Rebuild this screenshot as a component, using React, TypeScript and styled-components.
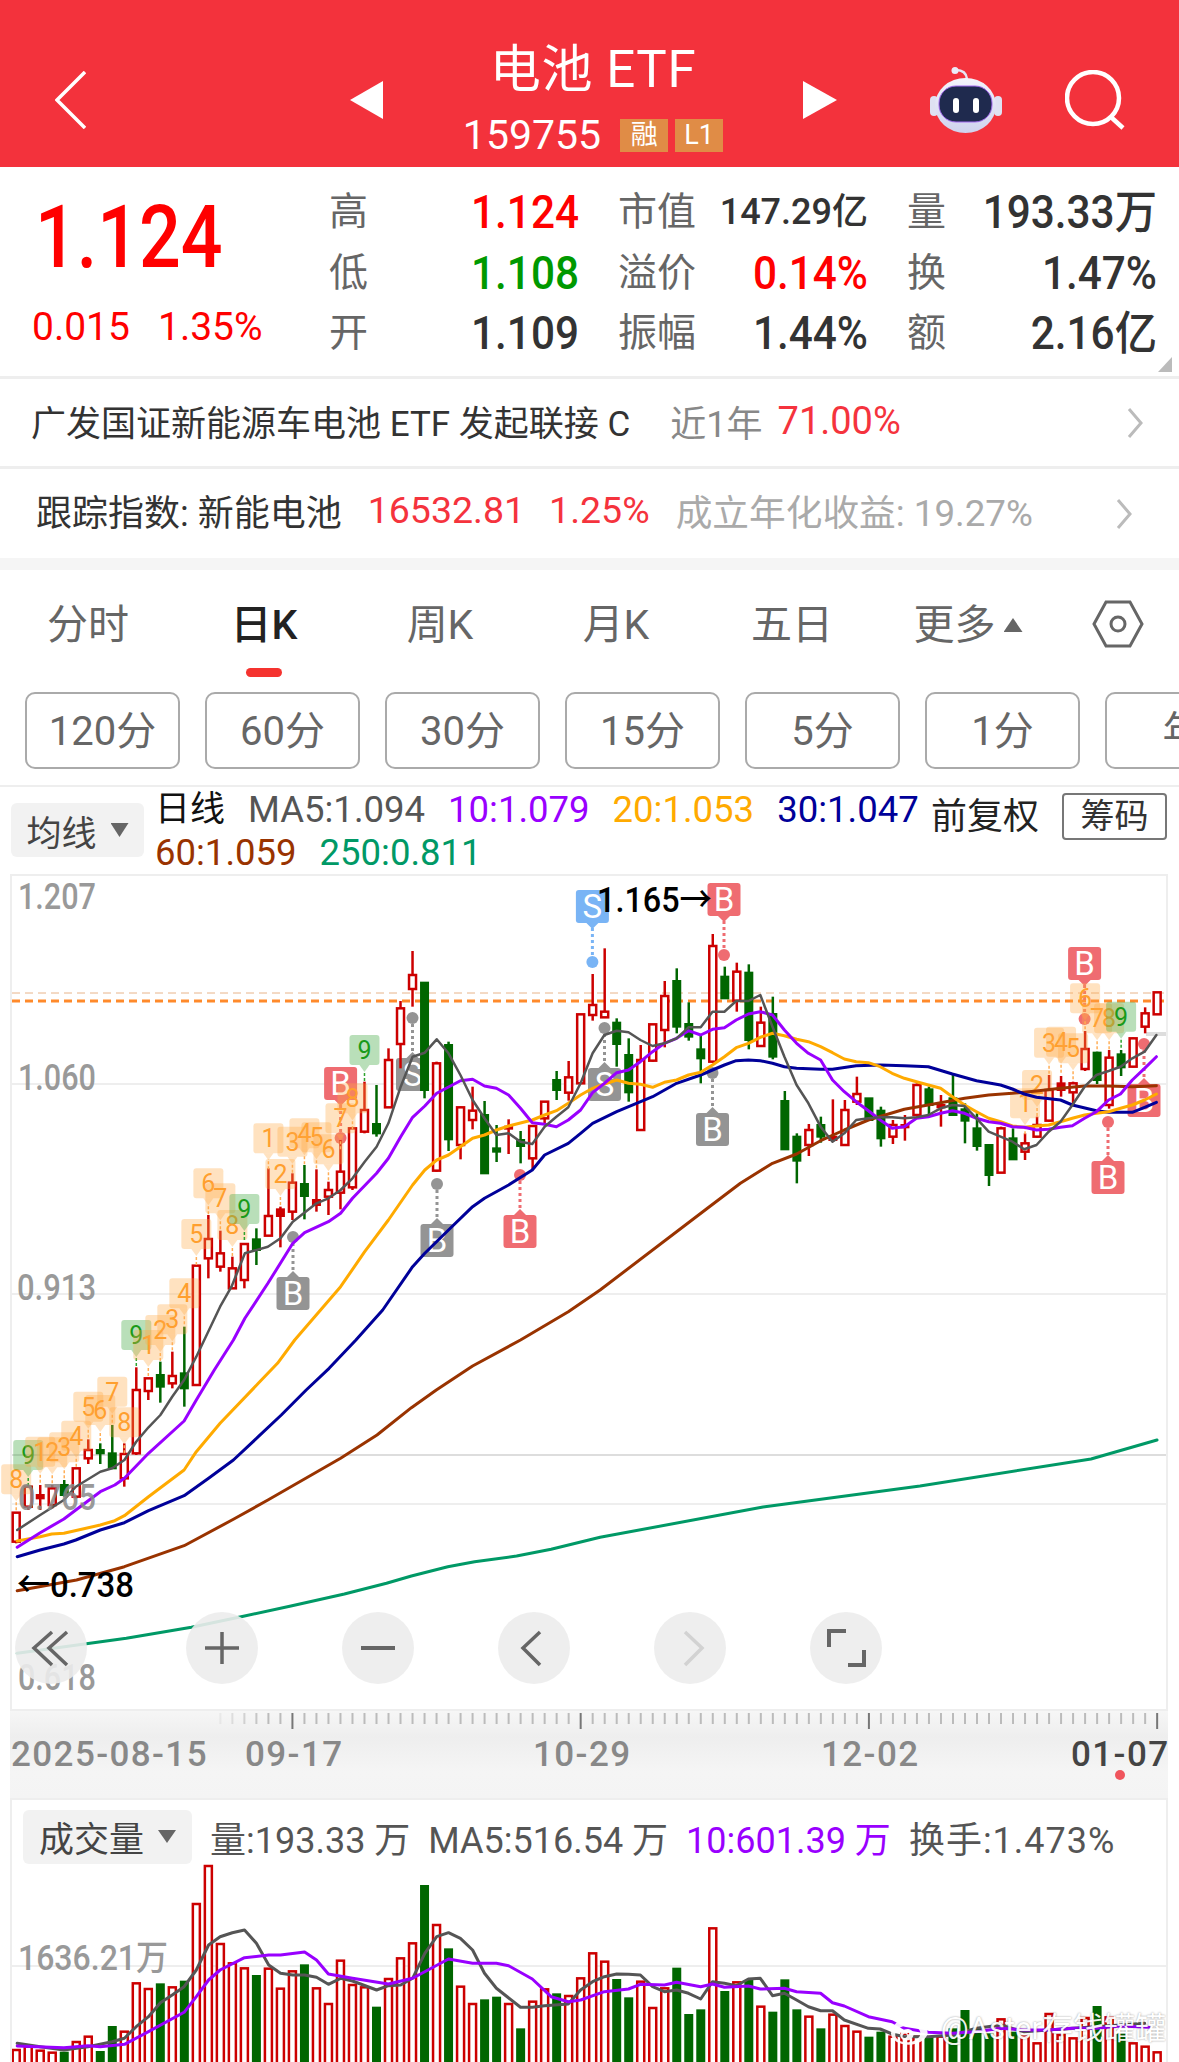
import React from 'react';
import styled, { createGlobalStyle } from 'styled-components';
import { FaWeibo } from 'react-icons/fa';

const GlobalStyle = createGlobalStyle`
    html, body {
        margin: 0;
        padding: 0;
        background: #fff;
    }
    * {
        box-sizing: border-box;
    }
`;

const FONT = 'Roboto, "Noto Sans CJK SC", sans-serif';
const RED = '#cc0000';
const GREEN = '#006600';

type Pt = [number, number];
type Frame = { ox: number; sx: number; oy: number };

// readings off the crops: each zoom has its own origin and x scale
const Z3: Frame = { ox: 0, sx: 2.613, oy: 870 };
const Z4: Frame = { ox: 580, sx: 2.618, oy: 870 };
const Z5: Frame = { ox: 0, sx: 2.613, oy: 1340 };
const Z6: Frame = { ox: 0, sx: 2.613, oy: 1780 };
const Z7: Frame = { ox: 580, sx: 2.618, oy: 1780 };
const PX: Frame = { ox: 0, sx: 1, oy: 0 };

const pts = (s: string, f: Frame): Pt[] =>
    s.split(' ').map((p) => {
        const [x, y] = p.split(',').map(Number);
        return [f.ox + x / f.sx, f.oy + (f === PX ? y : y / 3)] as Pt;
    });

const toPath = (list: Pt[]) => list.map(([x, y]) => `${x.toFixed(1)},${y.toFixed(1)}`).join(' ');

const cx = (i: number) => 16.2 + 12.01 * i;
const cy = (z: number) => 870 + z / 3;

const MA5 = [
    ...pts('45,570 105,525 167,480 198,440 262,395 293,385 325,360 356,305 388,262 419,225 450,170 481,120 513,50', Z5),
    ...pts('575,1310 605,1250 640,1150 700,1130 733,1105 765,1055 827,1000 858,985 890,960 921,925 953,875 984,830 1015,760 1047,650 1078,560 1110,548 1141,508 1172,550 1203,615 1235,690 1266,745 1297,795 1329,790 1360,815 1391,822 1423,770 1454,740 1485,712 1517,640', Z3),
    ...pts('33,550 64,495 96,482 127,487 158,510 190,528 221,520 253,505 284,472 316,472 347,425 378,425 409,393 441,393 472,375 504,470 535,560 567,645 598,700 630,770 661,815 692,790 723,750 755,745 786,742 817,742 849,745 881,742 912,735 944,715 975,705 1007,708 1038,745 1070,785 1101,800 1132,815 1163,838 1195,825 1227,785 1258,755 1289,705 1321,650 1352,615 1384,603 1415,590 1446,565 1478,545 1509,495', Z4),
];
const MA10 = [
    ...pts('45,622 105,578 167,537 198,510 262,455 300,435 325,415 388,340 481,243 513,180 560,90 610,0', Z5),
    ...pts('640,1345 700,1240 765,1120 796,1088 858,1055 890,1030 921,985 984,910 1015,865 1047,800 1078,742 1110,708 1141,670 1203,632 1235,628 1266,648 1297,655 1329,675 1360,715 1391,758 1423,763 1454,770 1485,750 1517,720', Z3),
    ...pts('33,668 64,640 96,608 127,600 158,575 190,545 221,520 253,505 284,482 316,495 347,478 378,473 409,450 441,432 472,425 504,435 535,480 567,520 598,550 630,570 661,630 692,665 723,695 755,722 786,750 817,775 849,770 881,745 912,740 944,730 975,722 1007,730 1038,745 1070,755 1101,760 1132,770 1163,772 1195,780 1227,778 1258,772 1289,767 1321,745 1352,725 1384,690 1415,672 1446,630 1478,595 1509,560', Z4),
];
const MA20 = [
    ...pts('45,603 105,590 135,582 167,580 262,555 300,542 325,527 388,470 481,390 513,335 575,250 675,130 725,70 770,0', Z5),
    ...pts('890,1250 953,1145 1015,1050 1078,945 1110,900 1141,870 1172,855 1203,830 1235,805 1266,795 1297,780 1329,768 1391,750 1423,735 1454,722 1485,700 1517,675', Z3),
    ...pts('33,655 64,642 96,630 127,640 158,643 190,652 221,637 253,630 284,615 316,607 347,585 378,560 409,533 441,520 472,502 504,490 535,497 567,508 598,515 630,530 661,548 692,567 723,575 755,578 786,590 817,610 849,625 881,635 912,645 944,655 975,680 1007,705 1038,725 1070,745 1101,755 1132,768 1163,772 1195,768 1227,765 1258,755 1289,745 1321,735 1352,730 1384,725 1415,715 1446,705 1478,690 1509,672', Z4),
];
const MA30 = [
    ...pts('45,650 105,630 167,612 198,600 262,570 325,548 388,512 481,467 545,415 610,360 675,290 735,225 800,150 860,85 930,0', Z5),
    ...pts('1000,1320 1078,1190 1110,1150 1172,1080 1235,1010 1266,985 1329,945 1391,900 1423,855 1485,820 1517,790', Z3),
    ...pts('33,760 96,725 190,680 253,640 316,615 378,585 409,572 441,570 472,572 504,580 535,590 567,595 630,598 661,598 723,587 786,585 849,587 912,590 975,612 1038,632 1101,645 1132,657 1163,672 1195,682 1258,690 1289,705 1352,722 1384,727 1446,727 1478,712 1509,697', Z4),
];
const MA60 = [
    ...pts('45,752 200,720 325,680 481,617 610,538 700,480 890,355 985,285 1075,203 1140,150 1235,78 1360,0', Z5),
    ...pts('1485,1325 1568,1260', Z3),
    ...pts('330,1018 420,940 504,880 567,852 630,812 692,780 755,750 849,718 944,698 1007,685 1070,675 1132,670 1195,663 1258,655 1321,648 1384,648 1446,650 1509,647', Z4),
];
const MA250 = [
    ...pts('45,940 330,895 500,862 630,830 760,798 900,762 1010,730 1075,708 1170,680 1240,665 1350,648 1440,628 1568,592', Z5),
    ...pts('763,1507 920,1486 1091,1459 1157,1440', PX),
];

const VOL5 = [
    ...pts('45,790 105,800 167,810 230,800 293,785 325,775 356,740 388,710 419,668 450,645 481,620 513,570 545,495 575,470 607,458 639,450 670,490 702,555 733,580 765,585 796,585 827,592 858,613 890,595 921,603 984,630 1015,617 1047,615 1078,595 1110,520 1141,470 1172,458 1203,475 1235,510 1266,580 1297,625 1360,682 1391,682 1423,677 1485,672 1517,630', Z6),
    ...pts('33,605 64,590 96,582 127,583 158,585 190,620 221,635 253,630 284,640 316,657 347,605 378,610 409,617 441,597 472,595 504,647 535,640 567,660 598,680 630,692 661,692 692,720 755,745 786,747 817,762 849,770 912,770 975,765 1038,745 1101,735 1163,755 1227,750 1289,745 1352,740 1415,735 1478,730', Z7),
];
const VOL10 = [
    ...pts('45,798 167,803 230,797 262,800 325,793 388,755 481,697 513,650 545,600 575,570 639,533 702,525 733,525 796,516 827,540 858,582 921,595 1015,612 1078,595 1172,537 1235,550 1297,550 1329,557 1391,597 1440,650 1485,665 1517,660', Z6),
    ...pts('64,635 127,627 158,613 221,615 253,607 316,620 347,612 378,622 441,618 472,627 535,625 567,635 630,640 661,668 692,678 755,710 817,725 849,745 912,757 975,760 1038,755 1101,745 1163,750 1227,750 1289,745 1352,745 1415,738 1490,742', Z7),
];

// kind, body top, body bottom, wick top, wick bottom
type CandleRow = ['h' | 'r' | 'g', number, number, number, number];
const CANDLES: CandleRow[] = [
    ['h', 1928, 2015, 1928, 2020], ['h', 1850, 1910, 1845, 1920], ['r', 1875, 1885, 1845, 1920], ['h', 1855, 1905, 1845, 1915],
    ['g', 1845, 1875, 1830, 1880], ['h', 1795, 1880, 1795, 1885], ['h', 1740, 1765, 1708, 1782], ['g', 1740, 1750, 1720, 1782],
    ['g', 1750, 1795, 1665, 1795], ['h', 1752, 1825, 1720, 1850], ['h', 1560, 1750, 1492, 1755], ['h', 1525, 1563, 1525, 1590],
    ['g', 1515, 1550, 1475, 1598], ['h', 1518, 1540, 1445, 1555], ['g', 1510, 1555, 1370, 1610], ['h', 1187, 1545, 1187, 1545],
    ['h', 1107, 1165, 1035, 1225], ['h', 1150, 1190, 1082, 1205], ['h', 1195, 1255, 1160, 1255], ['h', 1122, 1230, 1122, 1255],
    ['g', 1108, 1140, 1075, 1185], ['h', 1038, 1097, 895, 1097], ['r', 1018, 1038, 1010, 1132], ['h', 938, 1025, 910, 1050],
    ['g', 942, 978, 885, 1048], ['r', 990, 1005, 898, 1025], ['h', 960, 980, 935, 1035], ['h', 905, 968, 810, 1018],
    ['h', 775, 952, 775, 960], ['h', 720, 785, 635, 790], ['g', 762, 790, 645, 800], ['h', 570, 712, 535, 712],
    ['h', 415, 522, 393, 595], ['h', 315, 357, 243, 410], ['g', 338, 660, 338, 685], ['h', 580, 902, 575, 905],
    ['g', 525, 808, 515, 843], ['h', 712, 825, 710, 868], ['h', 722, 750, 650, 778], ['g', 735, 910, 693, 912],
    ['g', 835, 845, 765, 876], ['r', 770, 776, 748, 852], ['g', 810, 828, 783, 880], ['h', 768, 865, 765, 897],
    ['h', 695, 745, 693, 760], ['g', 630, 660, 603, 690], ['h', 622, 668, 573, 692], ['h', 433, 640, 433, 642],
    ['h', 405, 435, 312, 452], ['h', 425, 442, 235, 442], ['g', 458, 522, 445, 590], ['g', 555, 667, 505, 695],
    ['h', 570, 780, 525, 780], ['h', 463, 572, 463, 575], ['h', 378, 480, 333, 532], ['g', 333, 470, 295, 490],
    ['g', 462, 500, 397, 512], ['g', 538, 565, 495, 640], ['h', 228, 575, 192, 578], ['g', 320, 385, 290, 385],
    ['h', 305, 392, 278, 425], ['g', 308, 510, 283, 538], ['h', 458, 528, 410, 530], ['g', 432, 560, 380, 568],
    ['g', 693, 838, 663, 840], ['g', 800, 872, 790, 940], ['h', 780, 825, 762, 858], ['g', 765, 800, 740, 818],
    ['r', 800, 810, 688, 815], ['h', 720, 825, 690, 828], ['h', 672, 695, 620, 705], ['g', 685, 750, 685, 750],
    ['g', 722, 805, 710, 830], ['h', 765, 800, 750, 822], ['r', 765, 772, 735, 812], ['h', 645, 735, 640, 737],
    ['g', 658, 705, 650, 735], ['r', 705, 712, 675, 770], ['g', 685, 735, 613, 735], ['g', 718, 752, 700, 820],
    ['g', 775, 828, 730, 842], ['g', 825, 915, 825, 948], ['h', 775, 908, 770, 908], ['g', 805, 868, 775, 868],
    ['h', 820, 845, 790, 870], ['h', 765, 800, 740, 803], ['h', 660, 752, 615, 755], ['r', 640, 660, 618, 680],
    ['h', 640, 667, 635, 705], ['h', 537, 597, 483, 603], ['g', 548, 630, 545, 642], ['h', 563, 705, 540, 716],
    ['g', 553, 592, 540, 618], ['h', 505, 590, 503, 592], ['h', 430, 470, 412, 490], ['h', 367, 433, 367, 435],
];

// top of each volume bar, in crop units
const VOL_TOPS = [
    810, 800, 812, 818, 815, 786, 770, 813, 738, 755, 610, 627, 610, 622, 602, 372, 258, 492, 550, 565,
    585, 566, 626, 574, 553, 625, 672, 542, 615, 622, 680, 597, 535, 490, 315, 435, 505, 620, 672, 658,
    650, 672, 745, 665, 628, 640, 648, 595, 520, 545, 597, 652, 605, 684, 625, 563, 702, 688, 445, 633,
    607, 600, 680, 695, 598, 688, 710, 745, 704, 738, 755, 770, 755, 770, 762, 770, 770, 770, 745, 690,
    745, 760, 718, 755, 770, 790, 702, 765, 775, 714, 678, 712, 760, 790, 800, 817,
];
const VOL_GREEN = new Set([4, 7, 8, 12, 14, 20, 24, 30, 34, 36, 39, 40, 42, 45, 50, 51, 55, 56, 57, 59, 61, 63, 64, 65, 67, 71, 72, 76, 78, 79, 80, 81, 83, 90, 92]);

// candle index, digit, centre of the flag in crop units
const SEQ: [number, number, number][] = [
    [0, 8, 1828], [1, 9, 1755], [2, 1, 1745], [3, 2, 1747], [4, 3, 1732], [5, 4, 1697], [6, 5, 1610], [7, 6, 1620], [8, 7, 1565], [9, 8, 1657],
    [10, 9, 1395], [11, 1, 1425], [12, 2, 1380], [13, 3, 1348], [14, 4, 1270], [15, 5, 1092], [16, 6, 940], [17, 7, 985], [18, 8, 1065], [19, 9, 1017],
    [21, 1, 805], [22, 2, 912], [23, 3, 815], [24, 4, 790], [25, 5, 802], [26, 6, 838], [27, 7, 745], [28, 8, 685], [29, 9, 540],
    [84, 1, 700], [85, 2, 645], [86, 3, 518], [87, 4, 515], [88, 5, 535], [89, 6, 385], [90, 7, 445], [91, 8, 445], [92, 9, 440],
];

const FLAG_RED = '#ee6066';
const FLAG_GRAY = '#8c8c8c';
const FLAG_BLUE = '#6eaef5';

// x, top of box, y of dot, letter, colour
const SIGNALS: [number, number, number, string, string][] = [
    [340.6, 1067, 1138, 'B', FLAG_RED],
    [520, 1215, 1175, 'B', FLAG_RED],
    [724, 883, 955, 'B', FLAG_RED],
    [1084.6, 947, 1019, 'B', FLAG_RED],
    [1108, 1161, 1122, 'B', FLAG_RED],
    [1144, 1084, 1044, 'B', FLAG_RED],
    [293, 1277, 1237, 'B', FLAG_GRAY],
    [437, 1224, 1184, 'B', FLAG_GRAY],
    [712.5, 1113, 1073, 'B', FLAG_GRAY],
    [412.5, 1058, 1018, 'S', FLAG_GRAY],
    [604.5, 1068, 1028, 'S', FLAG_GRAY],
    [592.4, 890, 962, 'S', FLAG_BLUE],
];

const Page = styled.div`
    width: 1179px;
    height: 2062px;
    overflow: hidden;
    background: #fff;
    font-family: ${FONT};
    color: #333;
`;

const Header = styled.header`
    height: 167px;
    background: #f3323c;
    display: flex;
    align-items: center;
    padding: 32px 0 0 55px;
    color: #fff;
`;

const IconButton = styled.svg<{ $gap: number }>`
    display: block;
    flex: none;
    margin-left: ${(p) => p.$gap}px;
`;

const TitleBlock = styled.div`
    width: 420px;
    height: 135px;
    margin-top: -32px;
    display: flex;
    flex-direction: column;
    align-items: center;
`;

const Title = styled.div`
    font-size: 51px;
    line-height: 60px;
    margin-top: 24px;
    letter-spacing: 0.6px;
`;

const SubTitle = styled.div`
    display: flex;
    align-items: center;
    gap: 7px;
    margin-top: 19px;
    height: 33px;
`;

const Code = styled.span`
    font-size: 41px;
    line-height: 33px;
    margin-right: 12px;
`;

const Badge = styled.span`
    width: 48px;
    height: 33px;
    background: #e08c46;
    font-size: 27px;
    line-height: 33px;
    text-align: center;
`;

const Quote = styled.section`
    position: relative;
    height: 212px;
    display: flex;
    border-bottom: 3px solid #eee;
`;

const PriceBlock = styled.div`
    width: 329px;
    padding-left: 35px;
    color: #ff0000;
`;

const Price = styled.div`
    font-size: 87px;
    font-weight: 500;
    line-height: 100px;
    margin-top: 20px;
    transform: scaleX(0.845);
    transform-origin: left center;
`;

const Change = styled.div`
    display: flex;
    gap: 28px;
    font-size: 39px;
    line-height: 46px;
    margin: 17px 0 0 -3px;
`;

const QuoteGrid = styled.div`
    display: grid;
    grid-template-columns: 50px 200px 129px 160px 88px 201px;
    grid-template-rows: repeat(3, 60.5px);
    padding-top: 15px;
    align-items: center;
`;

const CellLabel = styled.span<{ $indent?: boolean }>`
    font-size: 39px;
    color: #666;
    line-height: 46px;
    padding-left: ${(p) => (p.$indent ? 39 : 0)}px;
    white-space: nowrap;
`;

const CellValue = styled.span<{ $color?: string; $size?: number }>`
    font-size: ${(p) => p.$size ?? 46}px;
    font-weight: 500;
    line-height: 46px;
    text-align: right;
    white-space: nowrap;
    color: ${(p) => p.$color ?? '#333'};
    transform: scaleX(${(p) => (p.$size ? 1 : 0.92)});
    transform-origin: right center;
`;

const CornerMark = styled.span`
    position: absolute;
    right: 7px;
    bottom: 4px;
    width: 14px;
    height: 15px;
    background: #bbb;
    clip-path: polygon(100% 0, 100% 100%, 0 100%);
`;

const InfoRow = styled.div<{ $last?: boolean; $pad: number }>`
    height: ${(p) => (p.$last ? 101 : 90)}px;
    display: flex;
    align-items: center;
    padding-left: ${(p) => p.$pad}px;
    padding-bottom: ${(p) => (p.$last ? 8 : 4)}px;
    white-space: nowrap;
    border-bottom: ${(p) => (p.$last ? 12 : 3)}px solid ${(p) => (p.$last ? '#f5f5f5' : '#eee')};
    position: relative;
`;

const InfoText = styled.span<{ $color?: string; $gap?: number; $size?: number }>`
    color: ${(p) => p.$color ?? '#333'};
    margin-left: ${(p) => p.$gap ?? 0}px;
    font-size: ${(p) => p.$size ?? 35}px;
`;

const InfoArrow = styled.svg<{ $right: number }>`
    position: absolute;
    right: ${(p) => p.$right}px;
    top: 50%;
    margin-top: -15px;
`;

const Tabs = styled.nav`
    height: 110px;
    display: flex;
`;

const Tab = styled.div<{ $active?: boolean }>`
    width: 176px;
    display: flex;
    flex-direction: column;
    align-items: center;
    padding-top: 31px;
    font-size: 41px;
    line-height: 48px;
    color: ${(p) => (p.$active ? '#222' : '#666')};
    font-weight: ${(p) => (p.$active ? 500 : 400)};
`;

const TabLabel = styled.span`
    display: flex;
    align-items: center;
    gap: 8px;
`;

const Caret = styled.span<{ $color?: string; $up?: boolean; $w?: number; $h?: number }>`
    display: inline-block;
    width: ${(p) => p.$w ?? 18}px;
    height: ${(p) => p.$h ?? 14}px;
    background: ${(p) => p.$color ?? '#666'};
    clip-path: ${(p) => (p.$up ? 'polygon(50% 0, 100% 100%, 0 100%)' : 'polygon(0 0, 100% 0, 50% 100%)')};
`;

const TabMark = styled.span`
    width: 36px;
    height: 9px;
    margin-top: 19px;
    border-radius: 5px;
    background: #f5332f;
`;

const SettingsSlot = styled.div`
    flex: 1;
    display: flex;
    justify-content: center;
    padding-top: 30px;
`;

const Periods = styled.div`
    height: 107px;
    display: flex;
    gap: 25px;
    padding: 12px 0 0 25px;
    overflow: hidden;
    border-bottom: 2px solid #eee;
`;

const Period = styled.div`
    flex: none;
    width: 155px;
    height: 77px;
    border: 2px solid #aaa;
    border-radius: 10px;
    font-size: 40px;
    line-height: 75px;
    text-align: center;
    color: #666;
    white-space: nowrap;
    overflow: hidden;
`;

const MaBar = styled.div`
    height: 87px;
    display: flex;
`;

const Selector = styled.div<{ $w: number }>`
    flex: none;
    width: ${(p) => p.$w}px;
    height: 54px;
    background: #f2f2f2;
    border-radius: 6px;
    display: flex;
    align-items: center;
    justify-content: center;
    gap: 14px;
    font-size: 35px;
    color: #444;
`;

const MaSelector = styled(Selector)`
    margin: 16px 0 0 11px;
`;

const Legend = styled.div`
    width: 776px;
    margin-left: 11px;
`;

const LegendLine = styled.div`
    display: flex;
    gap: 23px;
    height: 43px;
    line-height: 45px;
    white-space: nowrap;
`;

const LegendItem = styled.span<{ $color: string; $cjk?: boolean }>`
    color: ${(p) => p.$color};
    font-size: ${(p) => (p.$cjk ? 35 : 36.5)}px;
`;

const Adjust = styled.div`
    font-size: 36px;
    line-height: 44px;
    margin-top: 8px;
    color: #222;
    width: 131px;
`;

const ChipButton = styled.div`
    width: 105px;
    height: 47px;
    margin-top: 6px;
    border: 2px solid #777;
    border-radius: 4px;
    font-size: 34px;
    line-height: 42px;
    text-align: center;
    color: #333;
`;

const ChartFrame = styled.div`
    position: relative;
    margin: 0 11px 0 10px;
    height: 837px;
    border: 2px solid #eee;
`;

const ChartSvg = styled.svg`
    display: block;
    overflow: visible;
    font-family: ${FONT};
`;

const Toolbar = styled.div`
    position: absolute;
    left: 3px;
    top: 736px;
    display: flex;
    gap: 84px;
`;

const RoundButton = styled.div<{ $first?: boolean }>`
    width: 72px;
    height: 72px;
    border-radius: 50%;
    background: rgba(236, 236, 236, 0.9);
    margin-right: ${(p) => (p.$first ? 15 : 0)}px;
`;

const RoundIcon = styled.svg`
    display: block;
    fill: none;
`;

const TimeAxis = styled.div`
    margin-left: 10px;
    width: 1158px;
    height: 87px;
    background: linear-gradient(180deg, #f6f6f6 0%, #eeeeee 30%, #f5f5f5 70%, #f4f4f4 100%);
`;

const AxisLabel = styled.text<{ $strong?: boolean }>`
    font-size: 35px;
    font-weight: 500;
    letter-spacing: 1.4px;
    fill: ${(p) => (p.$strong ? '#444' : '#888')};
`;

const PriceLabel = styled.text`
    font-size: 36px;
    font-weight: 500;
    fill: #888;
    opacity: 0.85;
`;

const ExtremeLabel = styled.text`
    font-size: 35px;
    font-weight: 500;
    fill: #000;
`;

const SeqDigit = styled.text<{ $green: boolean }>`
    font-size: 25px;
    text-anchor: middle;
    fill: ${(p) => (p.$green ? '#1a9a1a' : '#ff9f2e')};
`;

const FlagLetter = styled.text`
    font-size: 33px;
    text-anchor: middle;
    fill: #fff;
`;

const VolumeFrame = styled.div`
    position: relative;
    margin: 0 11px 0 10px;
    height: 264px;
    overflow: hidden;
    border: 2px solid #eee;
    border-bottom: none;
`;

const VolumeHead = styled.div`
    height: 63px;
    padding: 10px 0 0 11px;
    display: flex;
    align-items: center;
    gap: 18px;
    white-space: nowrap;
`;

const VolumeItem = styled.span<{ $color?: string; $wide?: boolean }>`
    font-size: 36px;
    letter-spacing: ${(p) => (p.$wide ? 1 : 0)}px;
    color: ${(p) => p.$color ?? '#555'};
`;

const VolumeLabel = styled.text`
    font-size: 35px;
    font-weight: 500;
    fill: #888;
    opacity: 0.85;
`;

const Watermark = styled.div`
    position: absolute;
    right: 0;
    bottom: 12px;
    display: flex;
    align-items: center;
    gap: 8px;
    font-size: 31px;
    line-height: 36px;
    color: #fff;
    text-shadow: 0 0 2px rgba(0, 0, 0, 0.45);
    opacity: 0.92;
    white-space: nowrap;
`;

const RobotIcon = () => (
    <IconButton $gap={93} width={72} height={66} viewBox="0 0 72 66">
        <defs>
            <linearGradient id="robotHead" x1="0" y1="0" x2="0" y2="1">
                <stop offset="0" stopColor="#f4f4fb" />
                <stop offset="1" stopColor="#cfd2ee" />
            </linearGradient>
        </defs>
        <path d="M26 3 Q36 3 37 12" fill="none" stroke="#e6e6f4" strokeWidth="2.5" />
        <circle cx="25" cy="3.5" r="3.5" fill="#ecebf7" />
        <rect x="0" y="29" width="8" height="20" rx="4" fill="#dfe1f2" />
        <rect x="64" y="29" width="8" height="20" rx="4" fill="#dfe1f2" />
        <ellipse cx="35.5" cy="38.5" rx="30.5" ry="27.5" fill="url(#robotHead)" />
        <rect x="9" y="19" width="53" height="36" rx="17" fill="#1f2a4e" stroke="#a46bf0" strokeWidth="1" />
        <rect x="23" y="31" width="6" height="15" rx="3" fill="#fff" />
        <rect x="43" y="31" width="6" height="15" rx="3" fill="#fff" />
    </IconButton>
);

const Candle = ({ row, i }: { row: CandleRow; i: number }) => {
    const [kind, top, bottom, wickTop, wickBottom] = row;
    const x = cx(i);
    const color = kind === 'g' ? GREEN : RED;
    return (
        <g>
            <line x1={x} x2={x} y1={cy(wickTop)} y2={cy(wickBottom)} stroke={color} strokeWidth={2.5} />
            {kind === 'h' ? (
                <rect x={x - 3.5} y={cy(top)} width={7} height={cy(bottom) - cy(top)} fill="#fff" stroke={color} strokeWidth={2.5} />
            ) : (
                <rect x={x - 4.5} y={cy(top) - 1} width={9} height={cy(bottom) - cy(top) + 2} fill={color} />
            )}
        </g>
    );
};

const SeqFlag = ({ i, digit, z }: { i: number; digit: number; z: number }) => {
    const x = cx(i);
    const y = cy(z);
    const green = digit === 9;
    const fill = green ? 'rgba(70,170,70,0.38)' : 'rgba(255,170,70,0.34)';
    const stroke = green ? '#2ea32e' : '#ffae57';
    return (
        <g>
            <rect x={x - 15} y={y - 15} width={30} height={30} rx={3} fill={fill} />
            <path d={`M${x - 5} ${y + 15} L${x + 5} ${y + 15} L${x} ${y + 22} Z`} fill={fill} />
            <line x1={x} x2={x} y1={y + 23} y2={y + 33} stroke={stroke} strokeWidth={1.5} strokeDasharray="3 2" />
            <SeqDigit x={x} y={y + 9} $green={green}>{digit}</SeqDigit>
        </g>
    );
};

const SignalFlag = ({ x, top, dot, letter, color }: { x: number; top: number; dot: number; letter: string; color: string }) => {
    const bottom = top + 33;
    const below = dot > top;
    return (
        <g opacity={0.92}>
            <rect x={x - 16.5} y={top} width={33} height={33} rx={3} fill={color} />
            {below ? (
                <path d={`M${x - 6} ${bottom} L${x + 6} ${bottom} L${x} ${bottom + 6} Z`} fill={color} />
            ) : (
                <path d={`M${x - 6} ${top} L${x + 6} ${top} L${x} ${top - 6} Z`} fill={color} />
            )}
            <line
                x1={x}
                x2={x}
                y1={below ? bottom + 5 : dot}
                y2={below ? dot : top - 5}
                stroke={color}
                strokeWidth={3}
                strokeDasharray="3 3"
            />
            <circle cx={x} cy={dot} r={6} fill={color} />
            <FlagLetter x={x} y={top + 28}>{letter}</FlagLetter>
        </g>
    );
};

const MaLine = ({ points, color, width = 3 }: { points: Pt[]; color: string; width?: number }) => (
    <polyline points={toPath(points)} fill="none" stroke={color} strokeWidth={width} strokeLinejoin="round" strokeLinecap="round" />
);

const KChart = () => (
    <ChartSvg width={1154} height={833} viewBox="12 876 1154 833">
        <line x1={12} x2={1166} y1={1084} y2={1084} stroke="#eee" strokeWidth={2} />
        <line x1={12} x2={1166} y1={1294} y2={1294} stroke="#eee" strokeWidth={2} />
        <line x1={12} x2={1166} y1={1455} y2={1455} stroke="#ddd" strokeWidth={2} />
        <line x1={12} x2={1166} y1={1504} y2={1504} stroke="#eee" strokeWidth={2} />
        <line x1={12} x2={1166} y1={993} y2={993} stroke="#e8b48a" strokeWidth={1} strokeDasharray="8 5" />
        <line x1={12} x2={1166} y1={1001} y2={1001} stroke="#ff8a2b" strokeWidth={3} strokeDasharray="8 5" />
        <line x1={1146} x2={1166} y1={1034} y2={1034} stroke="#ddd" strokeWidth={4} />

        {SIGNALS.map(([x, top, dot, letter, color]) => (
            <SignalFlag key={`${x}-${top}`} x={x} top={top} dot={dot} letter={letter} color={color} />
        ))}
        {CANDLES.map((row, i) => <Candle key={i} row={row} i={i} />)}
        {SEQ.map(([i, digit, z]) => <SeqFlag key={i} i={i} digit={digit} z={z} />)}

        <MaLine points={MA250} color="#009966" />
        <MaLine points={MA60} color="#993300" />
        <MaLine points={MA30} color="#000099" />
        <MaLine points={MA20} color="#ffaa00" />
        <MaLine points={MA10} color="#9900ff" />
        <MaLine points={MA5} color="#555" width={2.5} />

        <PriceLabel x={18} y={909} textLength={78} lengthAdjust="spacingAndGlyphs">1.207</PriceLabel>
        <PriceLabel x={18} y={1090} textLength={78} lengthAdjust="spacingAndGlyphs">1.060</PriceLabel>
        <PriceLabel x={17} y={1300} textLength={79} lengthAdjust="spacingAndGlyphs">0.913</PriceLabel>
        <PriceLabel x={18} y={1510} textLength={78} lengthAdjust="spacingAndGlyphs">0.765</PriceLabel>
        <PriceLabel x={18} y={1690} textLength={78} lengthAdjust="spacingAndGlyphs">0.618</PriceLabel>
        <ExtremeLabel x={597} y={912} textLength={115} lengthAdjust="spacingAndGlyphs">1.165→</ExtremeLabel>
        <ExtremeLabel x={17} y={1597} textLength={117} lengthAdjust="spacingAndGlyphs">←0.738</ExtremeLabel>
    </ChartSvg>
);

const AxisTicks = () => {
    const ticks = [];
    for (let i = 17; i < 96; i++) {
        const tall = (i - 23) % 24 === 0;
        const fade = i < 21 ? (i - 16) / 5 : 1;
        ticks.push(
            <line
                key={i}
                x1={cx(i)}
                x2={cx(i)}
                y1={1713}
                y2={tall ? 1729 : 1724}
                stroke={tall ? '#777' : '#bbb'}
                strokeWidth={2}
                opacity={fade}
            />,
        );
    }
    return <>{ticks}</>;
};

const Axis = () => (
    <TimeAxis>
        <ChartSvg width={1158} height={87} viewBox="10 1711 1158 87">
            <AxisTicks />
            <AxisLabel x={11} y={1766}>2025-08-15</AxisLabel>
            <AxisLabel x={245} y={1766}>09-17</AxisLabel>
            <AxisLabel x={533} y={1766}>10-29</AxisLabel>
            <AxisLabel x={821} y={1766}>12-02</AxisLabel>
            <AxisLabel x={1071} y={1766} $strong>01-07</AxisLabel>
            <circle cx={1120} cy={1775} r={5} fill="#f0555d" />
        </ChartSvg>
    </TimeAxis>
);

const VolumeChart = () => (
    <ChartSvg width={1154} height={199} viewBox="12 1863 1154 199">
        <line x1={12} x2={1166} y1={1966} y2={1966} stroke="#eee" strokeWidth={2} />
        {VOL_TOPS.map((z, i) => {
            const y = 1780 + z / 3;
            const x = cx(i);
            return VOL_GREEN.has(i) ? (
                <rect key={i} x={x - 4.5} y={y} width={9} height={2070 - y} fill={GREEN} />
            ) : (
                <rect key={i} x={x - 3.5} y={y} width={7} height={2070 - y} fill="#fff" stroke={RED} strokeWidth={2.5} />
            );
        })}
        <MaLine points={VOL5} color="#555" />
        <MaLine points={VOL10} color="#9900ff" />
        <VolumeLabel x={18} y={1970} textLength={150} lengthAdjust="spacingAndGlyphs">1636.21万</VolumeLabel>
    </ChartSvg>
);

const App: React.FC = () => (
    <Page>
        <GlobalStyle />
        <Header>
            <IconButton $gap={0} width={31} height={58} viewBox="0 0 31 58">
                <path d="M30 1 L2 29 L30 57" fill="none" stroke="#fff" strokeWidth="3.5" />
            </IconButton>
            <IconButton $gap={264} width={33} height={38} viewBox="0 0 33 38">
                <path d="M33 0 V38 L0 19 Z" fill="#fff" />
            </IconButton>
            <TitleBlock>
                <Title>电池 ETF</Title>
                <SubTitle>
                    <Code>159755</Code>
                    <Badge>融</Badge>
                    <Badge>L1</Badge>
                </SubTitle>
            </TitleBlock>
            <IconButton $gap={0} width={34} height={38} viewBox="0 0 34 38">
                <path d="M0 0 V38 L34 19 Z" fill="#fff" />
            </IconButton>
            <RobotIcon />
            <IconButton $gap={63} width={60} height={60} viewBox="0 0 60 60">
                <circle cx="28" cy="28" r="26" fill="none" stroke="#fff" strokeWidth="4.5" />
                <path d="M47 48 L58 58" stroke="#fff" strokeWidth="4.5" />
            </IconButton>
        </Header>

        <Quote>
            <PriceBlock>
                <Price>1.124</Price>
                <Change>
                    <span>0.015</span>
                    <span>1.35%</span>
                </Change>
            </PriceBlock>
            <QuoteGrid>
                <CellLabel>高</CellLabel>
                <CellValue $color="#ff0000">1.124</CellValue>
                <CellLabel $indent>市值</CellLabel>
                <CellValue $size={36}>147.29亿</CellValue>
                <CellLabel $indent>量</CellLabel>
                <CellValue>193.33万</CellValue>

                <CellLabel>低</CellLabel>
                <CellValue $color="#009900">1.108</CellValue>
                <CellLabel $indent>溢价</CellLabel>
                <CellValue $color="#ff0000">0.14%</CellValue>
                <CellLabel $indent>换</CellLabel>
                <CellValue>1.47%</CellValue>

                <CellLabel>开</CellLabel>
                <CellValue>1.109</CellValue>
                <CellLabel $indent>振幅</CellLabel>
                <CellValue>1.44%</CellValue>
                <CellLabel $indent>额</CellLabel>
                <CellValue>2.16亿</CellValue>
            </QuoteGrid>
            <CornerMark />
        </Quote>

        <InfoRow $pad={31}>
            <InfoText>广发国证新能源车电池 ETF 发起联接 C</InfoText>
            <InfoText $color="#888" $gap={40} $size={36}>近1年</InfoText>
            <InfoText $color="#f5333d" $gap={15} $size={38}>71.00%</InfoText>
            <InfoArrow $right={36} width={16} height={30} viewBox="0 0 16 30">
                <path d="M2 1 L14 15 L2 29" fill="none" stroke="#bbb" strokeWidth="3" />
            </InfoArrow>
        </InfoRow>
        <InfoRow $pad={36} $last>
            <InfoText $size={36}>跟踪指数: 新能电池</InfoText>
            <InfoText $color="#f5333d" $gap={26} $size={37.5}>16532.81</InfoText>
            <InfoText $color="#f5333d" $gap={24} $size={37.5}>1.25%</InfoText>
            <InfoText $color="#aaa" $gap={26} $size={36.7}>成立年化收益: 19.27%</InfoText>
            <InfoArrow $right={47} width={16} height={30} viewBox="0 0 16 30">
                <path d="M2 1 L14 15 L2 29" fill="none" stroke="#bbb" strokeWidth="3" />
            </InfoArrow>
        </InfoRow>

        <Tabs>
            <Tab>分时</Tab>
            <Tab $active>
                日K
                <TabMark />
            </Tab>
            <Tab>周K</Tab>
            <Tab>月K</Tab>
            <Tab>五日</Tab>
            <Tab>
                <TabLabel>
                    更多
                    <Caret $up $w={19} $h={14} />
                </TabLabel>
            </Tab>
            <SettingsSlot>
                <svg width={52} height={48} viewBox="0 0 52 48" fill="none" stroke="#666" strokeWidth="3">
                    <path d="M2 24 L14 2 H38 L50 24 L38 46 H14 Z" />
                    <circle cx="26" cy="24" r="7" />
                </svg>
            </SettingsSlot>
        </Tabs>

        <Periods>
            {['120分', '60分', '30分', '15分', '5分', '1分', '年'].map((label) => (
                <Period key={label}>{label}</Period>
            ))}
        </Periods>

        <MaBar>
            <MaSelector $w={133}>
                均线
                <Caret />
            </MaSelector>
            <Legend>
                <LegendLine>
                    <LegendItem $color="#111" $cjk>日线</LegendItem>
                    <LegendItem $color="#555">MA5:1.094</LegendItem>
                    <LegendItem $color="#9900ff">10:1.079</LegendItem>
                    <LegendItem $color="#ffaa00">20:1.053</LegendItem>
                    <LegendItem $color="#000099">30:1.047</LegendItem>
                </LegendLine>
                <LegendLine>
                    <LegendItem $color="#993300">60:1.059</LegendItem>
                    <LegendItem $color="#009966">250:0.811</LegendItem>
                </LegendLine>
            </Legend>
            <Adjust>前复权</Adjust>
            <ChipButton>筹码</ChipButton>
        </MaBar>

        <ChartFrame>
            <KChart />
            <Toolbar>
                <RoundButton $first>
                    <RoundIcon width={72} height={72} viewBox="0 0 72 72" stroke="#666" strokeWidth="3.5">
                        <path d="M37 20 L19 36 L37 53 M52 20 L34 36 L52 53" />
                    </RoundIcon>
                </RoundButton>
                <RoundButton>
                    <RoundIcon width={72} height={72} viewBox="0 0 72 72" stroke="#666" strokeWidth="3.5">
                        <path d="M19 36 H53 M36 20 V52" />
                    </RoundIcon>
                </RoundButton>
                <RoundButton>
                    <RoundIcon width={72} height={72} viewBox="0 0 72 72" stroke="#666" strokeWidth="4">
                        <path d="M19 36 H53" />
                    </RoundIcon>
                </RoundButton>
                <RoundButton>
                    <RoundIcon width={72} height={72} viewBox="0 0 72 72" stroke="#666" strokeWidth="3.5">
                        <path d="M42 20 L25 36 L42 53" />
                    </RoundIcon>
                </RoundButton>
                <RoundButton>
                    <RoundIcon width={72} height={72} viewBox="0 0 72 72" stroke="#d2d2d2" strokeWidth="3.5">
                        <path d="M31 20 L48 36 L31 53" />
                    </RoundIcon>
                </RoundButton>
                <RoundButton>
                    <RoundIcon width={72} height={72} viewBox="0 0 72 72" stroke="#666" strokeWidth="4">
                        <path d="M19 35 V19 H36 M54 38 V53 H38" />
                    </RoundIcon>
                </RoundButton>
            </Toolbar>
        </ChartFrame>

        <Axis />

        <VolumeFrame>
            <VolumeHead>
                <Selector $w={169}>
                    成交量
                    <Caret $w={18} $h={13} />
                </Selector>
                <VolumeItem>量:193.33 万</VolumeItem>
                <VolumeItem>MA5:516.54 万</VolumeItem>
                <VolumeItem $color="#9900ff">10:601.39 万</VolumeItem>
                <VolumeItem $wide>换手:1.473%</VolumeItem>
            </VolumeHead>
            <VolumeChart />
            <Watermark>
                <FaWeibo size={42} />
                @Aster存钱罐罐
            </Watermark>
        </VolumeFrame>
    </Page>
);

export default App;
